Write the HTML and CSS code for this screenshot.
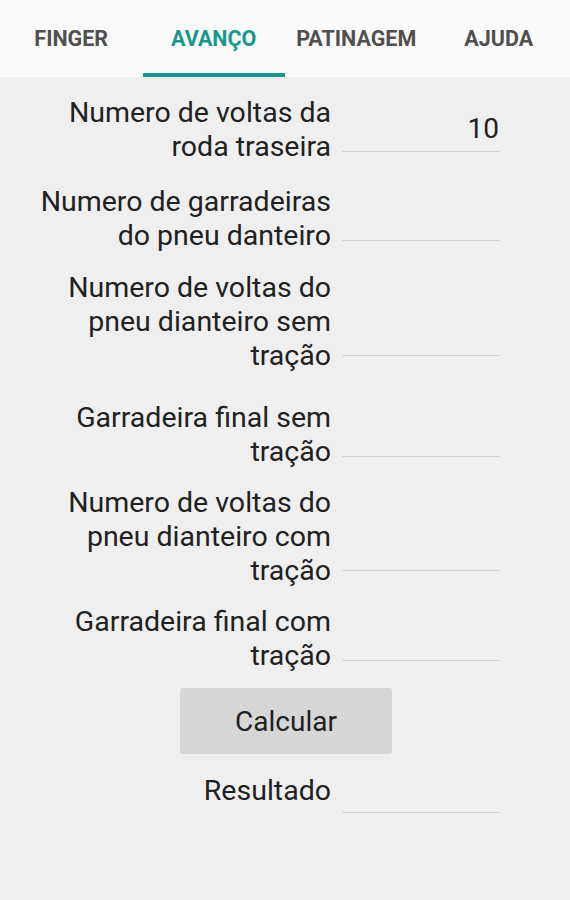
FILE: index.html
```html
<!DOCTYPE html>
<html lang="pt">
<head>
<meta charset="utf-8">
<title>Avanço</title>
<link rel="stylesheet" href="styles.css">
</head>
<body>
<header class="tabs">
  <div class="tab">FINGER</div>
  <div class="tab active">AVANÇO</div>
  <div class="tab">PATINAGEM</div>
  <div class="tab">AJUDA</div>
</header>
<main class="form">
  <div class="row r1">
    <div class="label">Numero de voltas da<br>roda traseira</div>
    <div class="field"><span class="value">10</span></div>
  </div>
  <div class="row r2">
    <div class="label">Numero de garradeiras<br>do pneu danteiro</div>
    <div class="field"></div>
  </div>
  <div class="row r3 tall">
    <div class="label">Numero de voltas do<br>pneu dianteiro sem<br>tração</div>
    <div class="field"></div>
  </div>
  <div class="row r4">
    <div class="label">Garradeira final sem<br>tração</div>
    <div class="field"></div>
  </div>
  <div class="row r5 tall">
    <div class="label">Numero de voltas do<br>pneu dianteiro com<br>tração</div>
    <div class="field"></div>
  </div>
  <div class="row r6">
    <div class="label">Garradeira final com<br>tração</div>
    <div class="field"></div>
  </div>
  <div class="btn-wrap">
    <button class="btn">Calcular</button>
  </div>
  <div class="row result">
    <div class="label">Resultado</div>
    <div class="field"></div>
  </div>
</main>
</body>
</html>
```
FILE: styles.css
```css
html, body {
  margin: 0;
  padding: 0;
}
body {
  width: 570px;
  height: 900px;
  background: #efefef;
  font-family: Roboto, "Liberation Sans", sans-serif;
  color: #212121;
  overflow: hidden;
}
.tabs {
  display: flex;
  height: 77px;
  background: #fafafa;
}
.tab {
  flex: 1;
  display: flex;
  align-items: center;
  justify-content: center;
  font-size: 21.5px;
  font-weight: 700;
  color: #505050;
  box-sizing: border-box;
  padding-top: 0;
}
.tab.active {
  color: #16998b;
  border-bottom: 4px solid #16998b;
  padding-top: 4px;
}
.form {
  display: flex;
  flex-direction: column;
}
.row {
  display: flex;
  align-items: flex-end;
  gap: 11px;
}
.label {
  width: 331px;
  text-align: right;
  font-size: 28.5px;
  line-height: 34px;
  flex-shrink: 0;
}
.field {
  width: 158px;
  height: 40px;
  border-bottom: 1px solid #d2d2d2;
  margin-bottom: 12px;
  display: flex;
  align-items: flex-end;
  justify-content: flex-end;
}
.tall .field {
  margin-bottom: 17px;
}
.value {
  font-size: 28px;
  line-height: 28px;
  padding-bottom: 8px;
  padding-right: 1px;
}
.r1 { margin-top: 19px; }
.r2 { margin-top: 21px; }
.r3 { margin-top: 18px; }
.r4 { margin-top: 28px; }
.r5 { margin-top: 17px; }
.r6 { margin-top: 17px; }
.btn-wrap {
  margin-top: 15px;
  padding-left: 180px;
}
.btn {
  width: 212px;
  height: 66px;
  border: none;
  border-radius: 3px;
  background: #d6d6d6;
  font-family: Roboto, "Liberation Sans", sans-serif;
  font-size: 28px;
  color: #212121;
  padding: 0;
}
.result {
  margin-top: 18px;
}
.result .field {
  margin-bottom: -5px;
}
```
